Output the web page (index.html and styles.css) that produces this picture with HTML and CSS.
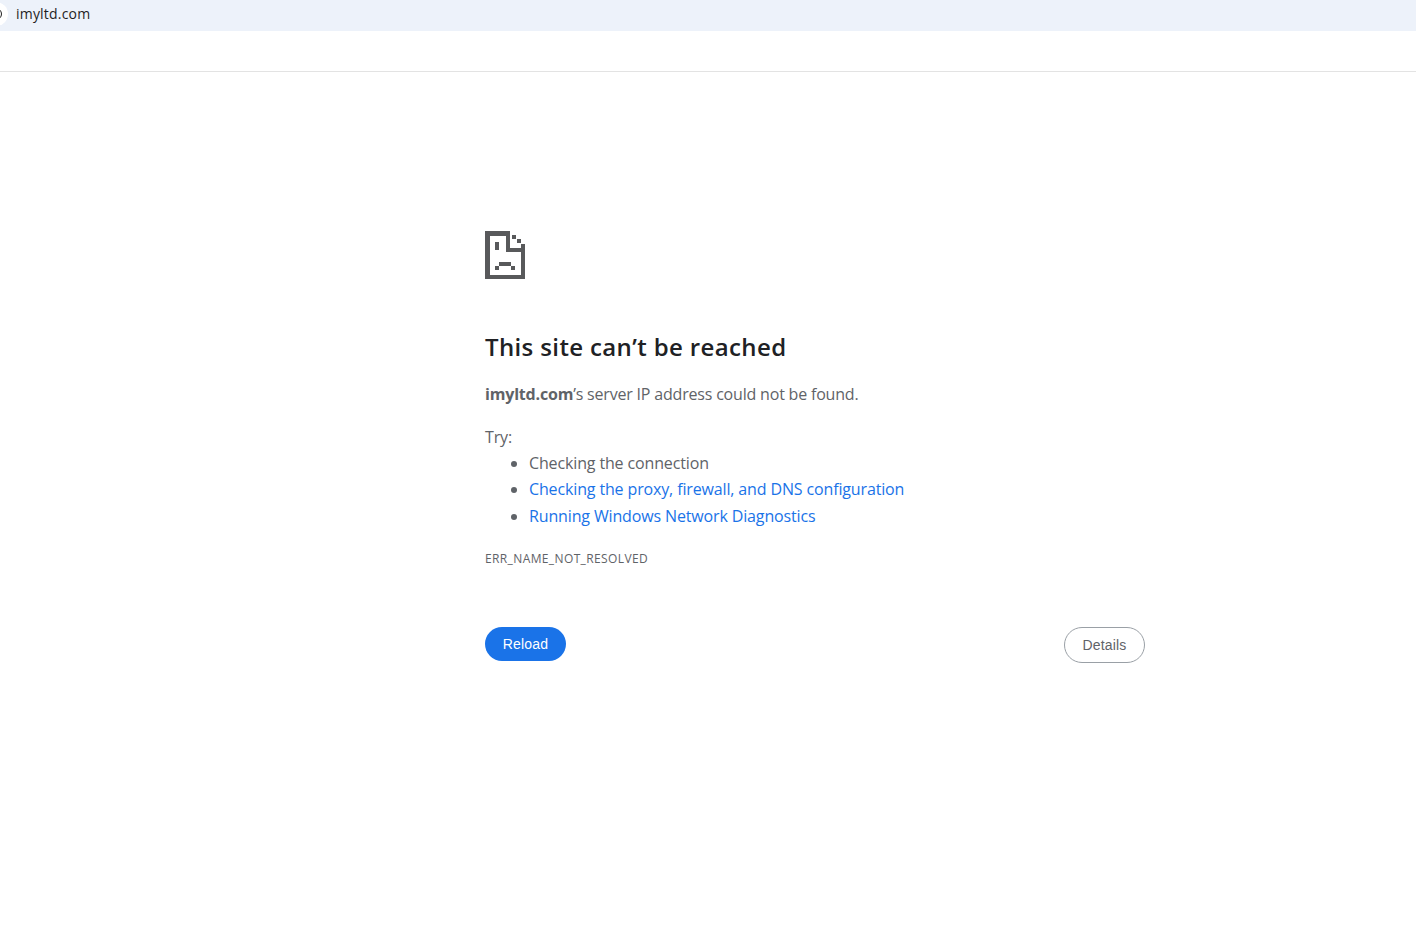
FILE: index.html
```html
<!DOCTYPE html>
<html lang="en">
<head>
<meta charset="utf-8">
<title>imyltd.com</title>
<link rel="stylesheet" href="styles.css">
</head>
<body>
<header class="browser">
  <div class="address">
    <span class="site-badge"><span class="site-glyph"></span></span>
    <span class="url">imyltd.com</span>
  </div>
  <div class="toolbar"></div>
</header>
<main class="page">
  <div class="panel">
    <svg class="sad" width="40" height="48" viewBox="0 0 40 48" fill="#58595b" shape-rendering="crispEdges">
      <path d="M0 0H25V5H5V44H36V13H40V48H0Z"/>
      <path d="M21 5H25V17H36V21H21Z"/>
      <rect x="27" y="4" width="4" height="4"/>
      <rect x="32" y="8" width="4" height="4"/>
      <rect x="10" y="11" width="4" height="8"/>
      <rect x="10" y="35" width="4" height="4"/>
      <rect x="14" y="31" width="12" height="4"/>
      <rect x="26" y="35" width="4" height="4"/>
    </svg>
    <h1 class="title">This site can’t be reached</h1>
    <p class="summary"><strong>imyltd.com</strong>’s server IP address could not be found.</p>
    <p class="try">Try:</p>
    <ul class="tips">
      <li>Checking the connection</li>
      <li><a href="#">Checking the proxy, firewall, and DNS configuration</a></li>
      <li><a href="#">Running Windows Network Diagnostics</a></li>
    </ul>
    <p class="code">ERR_NAME_NOT_RESOLVED</p>
    <div class="actions">
      <button class="btn primary">Reload</button>
      <button class="btn secondary">Details</button>
    </div>
  </div>
</main>
</body>
</html>
```
FILE: styles.css
```css
* { box-sizing: border-box; }
html, body { margin: 0; padding: 0; background: #fff; }
body { width: 1416px; height: 934px; overflow: hidden; font-family: "Open Sans", "Noto Sans", sans-serif; color: #5f6368; }
.browser { border-bottom: 1px solid #e3e3e3; height: 72px; }
.address { height: 31px; background: #edf2fa; display: flex; align-items: center; overflow: hidden; }
.site-badge { flex: none; width: 24px; height: 24px; margin-left: -16px; margin-bottom: 4px; background: #fff; border-radius: 50%; display: flex; align-items: center; justify-content: flex-end; padding-right: 6px; }
.site-glyph { flex: none; width: 12px; height: 12px; border: 1.5px solid #1f1f1f; border-radius: 50%; }
.url { margin-left: 8px; margin-bottom: 4px; font-size: 14px; color: #1f1f1f; line-height: 28px; letter-spacing: .2px; }
.page { display: flex; justify-content: flex-start; padding: 159px 0 0 485px; }
.panel { width: 660px; }
.sad { display: block; }
.title { margin: 48px 0 0; font-size: 24px; line-height: 40px; font-weight: 600; color: #202124; letter-spacing: .37px; }
.summary { margin: 13px 0 0; font-size: 16px; line-height: 28px; letter-spacing: -.19px; }
.summary strong { font-weight: 700; }
.try { margin: 16px 0 0; font-size: 16px; line-height: 26px; letter-spacing: -.14px; }
.tips { margin: 0; padding: 0 0 0 44px; font-size: 16px; line-height: 26.4px; letter-spacing: -.14px; }
a { color: #1a73e8; text-decoration: none; }
.code { margin: 20px 0 0; font-size: 12px; line-height: 20px; letter-spacing: .38px; }
.actions { display: flex; justify-content: space-between; align-items: flex-start; margin-top: 58px; }
.btn { font-family: "Liberation Sans", Arial, sans-serif; font-size: 14px; border-radius: 20px; cursor: pointer; padding: 0; letter-spacing: .15px; }
.primary { width: 81px; height: 34px; background: #1a73e8; border: 0; color: #fff; }
.secondary { width: 81px; height: 36px; background: #fff; border: 1px solid #9aa0a6; color: #5f6368; }
```
